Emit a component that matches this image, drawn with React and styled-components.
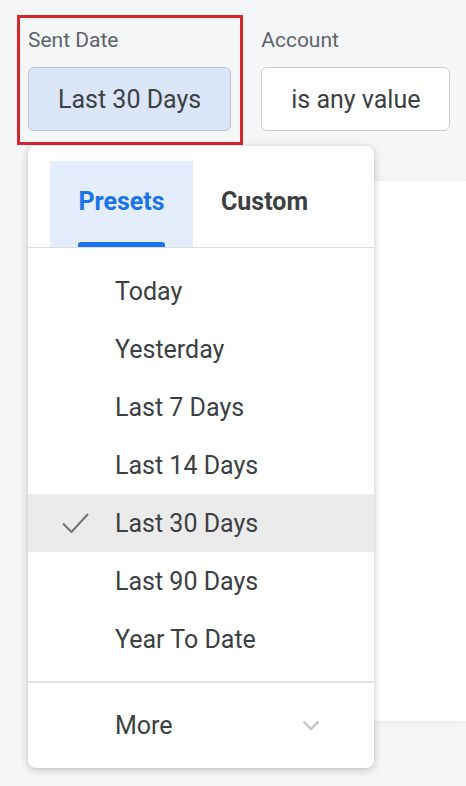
import React from 'react'
import styled, { createGlobalStyle } from 'styled-components'

const GlobalStyle = createGlobalStyle`
  body {
    margin: 0;
    background: #f5f6f8;
    font-family: Roboto, "Liberation Sans", sans-serif;
    color: #3c4043;
  }
`

const Page = styled.div`
  width: 466px;
  height: 786px;
  overflow: hidden;
  display: flex;
  flex-direction: column;
`

const FilterBar = styled.div`
  display: flex;
  gap: 7px;
  padding: 15px 0 0 17px;
`

const FilterGroup = styled.div`
  position: relative;
  display: flex;
  flex-direction: column;
  gap: 14px;
  padding: 10px 9px 11px 8px;
  border: 3px solid ${p => (p.highlighted ? '#d8262f' : 'transparent')};
`

const Label = styled.div`
  font-size: 21px;
  line-height: 25px;
  color: #5f6368;
`

const FilterButton = styled.button`
  height: 64px;
  padding: 0 29px;
  font-family: inherit;
  font-size: 25px;
  color: #3c4043;
  background: ${p => (p.active ? '#dae6f8' : '#fff')};
  border: 1px solid ${p => (p.active ? '#bcc3cc' : '#c9cbcd')};
  border-radius: 6px;
  white-space: nowrap;
`

const Panel = styled.div`
  margin: 36px 0 0 40px;
  height: 540px;
  background: #fff;
  box-shadow: 0 0 8px rgba(0, 0, 0, 0.06);
`

const Dropdown = styled.div`
  position: absolute;
  top: calc(100% + 4px);
  left: 8px;
  z-index: 2;
  width: 346px;
  height: 622px;
  display: flex;
  flex-direction: column;
  background: #fff;
  border-radius: 8px;
  box-shadow: 0 2px 8px rgba(0, 0, 0, 0.22), 0 0 2px rgba(0, 0, 0, 0.08);
`

const Tabs = styled.div`
  display: flex;
  padding: 15px 22px 0;
  border-bottom: 1px solid #dadce0;
`

const Tab = styled.div`
  width: 143px;
  height: 86px;
  display: flex;
  flex-direction: column;
  align-items: center;
  background: ${p => (p.active ? '#e3edfb' : 'transparent')};
  color: ${p => (p.active ? '#1a73e8' : '#3c4043')};
  font-size: 25px;
  font-weight: 700;
`

const TabText = styled.div`
  flex: 1;
  display: flex;
  align-items: center;
`

const Indicator = styled.div`
  width: 87px;
  height: 5px;
  border-radius: 3px 3px 0 0;
  background: ${p => (p.show ? '#1a73e8' : 'transparent')};
`

const List = styled.div`
  padding: 14px 0 13px;
  border-bottom: 2px solid #e3e3e3;
`

const Item = styled.div`
  height: 58px;
  display: flex;
  align-items: center;
  padding-left: 34px;
  font-size: 25px;
  background: ${p => (p.selected ? '#ebebeb' : 'transparent')};
`

const CheckSlot = styled.div`
  width: 53px;
  display: flex;
  align-items: center;
`

const MoreRow = styled.div`
  flex: 1;
  display: flex;
  align-items: center;
  justify-content: space-between;
  padding: 0 54px 0 87px;
  font-size: 25px;
`

const presets = ['Today', 'Yesterday', 'Last 7 Days', 'Last 14 Days', 'Last 30 Days', 'Last 90 Days', 'Year To Date']

function Check() {
  return (
    <svg width="27" height="20" viewBox="0 0 27 20">
      <polyline points="1,10.5 9.5,19 26,1" fill="none" stroke="#6e7371" strokeWidth="2" />
    </svg>
  )
}

function Chevron() {
  return (
    <svg width="18" height="11" viewBox="0 0 18 11">
      <polyline points="1.5,1.5 9,9 16.5,1.5" fill="none" stroke="#c6c6c6" strokeWidth="2.4" />
    </svg>
  )
}

export default function App() {
  const selected = 'Last 30 Days'
  return (
    <Page>
      <GlobalStyle />
      <FilterBar>
        <FilterGroup highlighted>
          <Label>Sent Date</Label>
          <FilterButton active>Last 30 Days</FilterButton>
          <Dropdown>
            <Tabs>
              <Tab active>
                <TabText>Presets</TabText>
                <Indicator show />
              </Tab>
              <Tab>
                <TabText>Custom</TabText>
                <Indicator />
              </Tab>
            </Tabs>
            <List>
              {presets.map(p => (
                <Item key={p} selected={p === selected}>
                  <CheckSlot>{p === selected && <Check />}</CheckSlot>
                  {p}
                </Item>
              ))}
            </List>
            <MoreRow>
              More
              <Chevron />
            </MoreRow>
          </Dropdown>
        </FilterGroup>
        <FilterGroup>
          <Label>Account</Label>
          <FilterButton>is any value</FilterButton>
        </FilterGroup>
      </FilterBar>
      <Panel />
    </Page>
  )
}
